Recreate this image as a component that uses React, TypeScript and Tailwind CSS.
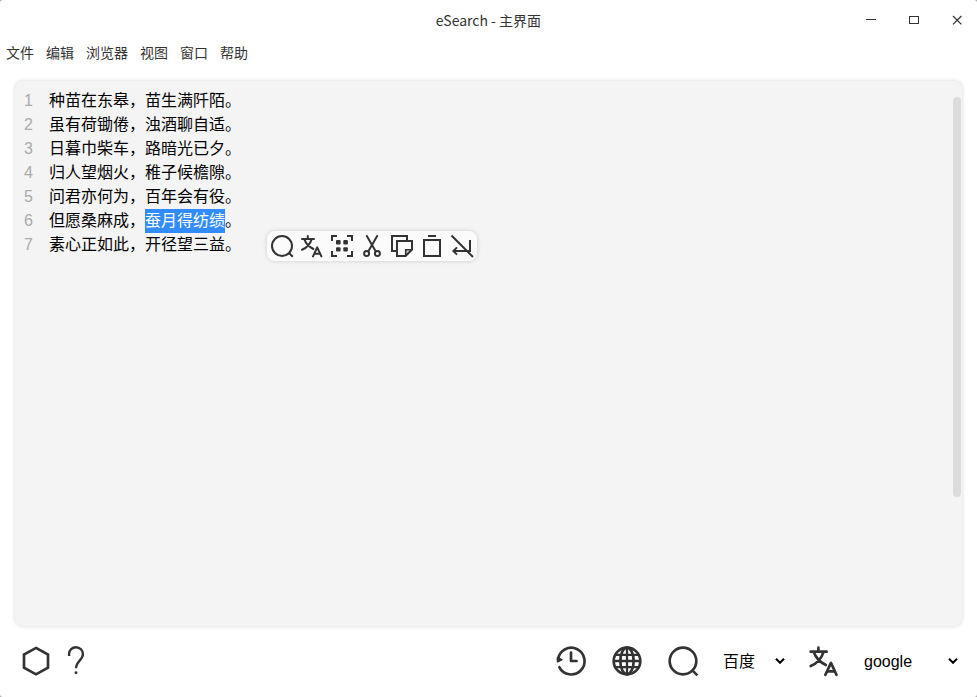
import React from "react";

type IconProps = { className?: string; children: React.ReactNode };

function Icon({ className = "size-[30px]", children }: IconProps) {
  return (
    <svg viewBox="0 0 30 30" className={`${className} block shrink-0`} fill="none" stroke="#333" strokeWidth={2}>
      {children}
    </svg>
  );
}

const searchArt = (
  <>
    <circle cx="15" cy="15" r="10" />
    <path d="M22 22l3.8 3.8" />
  </>
);
const translateArt = (
  <g strokeLinecap="round" strokeLinejoin="round">
    <path d="M10.8 5v3M5 8h12M14.6 8.4C13 13.5 9.5 17 5 18.8M7.4 8.4C9 13 12.4 16 16.4 18" />
    <path d="M16 25.4l4.2-9 4.2 9M17.5 22.8h5.4" />
  </g>
);
const scanArt = (
  <>
    <path d="M5 10V5h5M20 5h5v5M25 20v5h-5M10 25H5v-5" />
    <g fill="#333" stroke="none">
      <rect x="9" y="9" width="4.6" height="4.4" rx="1" />
      <rect x="16.3" y="9" width="4.6" height="4.4" rx="1" />
      <rect x="9" y="16.2" width="4.6" height="4.4" rx="1" />
      <rect x="16.3" y="16.2" width="4.6" height="4.4" rx="1" />
    </g>
  </>
);
const cutArt = (
  <>
    <path d="M9.4 4.2L18.8 20.4M20.6 4.2L11.2 20.4" />
    <circle cx="9.6" cy="22.5" r="2.5" />
    <circle cx="20.4" cy="22.5" r="2.5" />
  </>
);
const copyArt = (
  <>
    <path d="M9 20H5V5h15v4" />
    <path d="M18.5 25v-6.5H25z" fill="#ccc" stroke="none" />
    <path d="M10 10h15v8.6L18.6 25H10z" />
    <path d="M25 18.7h-6.3V25" strokeWidth="1.6" />
  </>
);
const pasteArt = (
  <>
    <rect x="7" y="9" width="16" height="16" />
    <path d="M11 5h8" />
  </>
);
const unwrapArt = <path d="M4.5 4.5L26 26M23 9v11H6.5M10 16.4L6.4 20l3.6 3.6" />;
const hexagonArt = <path d="M15 5.2l9 5v9.8l-9 5-9-5v-9.8z" />;
const questionArt = (
  <>
    <path d="M9.8 11.2V9.8A5.2 5.2 0 0 1 20.2 9.9C20.2 14 15 15.5 15 20.5" strokeWidth="1.8" />
    <circle cx="15" cy="23.8" r="1.1" fill="#333" stroke="none" />
  </>
);
const historyArt = (
  <g strokeLinecap="round" strokeLinejoin="round">
    <path d="M5.3 13.5A10 10 0 1 1 6.3 19.7" />
    <path d="M15 8.6V15h4.2" />
    <path d="M4.9 12.5v3l3.2-1.5z" fill="#333" strokeWidth="1.2" />
  </g>
);
const globeArt = (
  <>
    <circle cx="15" cy="15" r="10" />
    <ellipse cx="15" cy="15" rx="5" ry="10" />
    <path d="M15 5v20M5 15h20M6.6 10.4h16.8M6.6 19.6h16.8" strokeWidth="1.7" />
  </>
);

const menus = ["文件", "编辑", "浏览器", "视图", "窗口", "帮助"];
const poem = [
  ["种苗在东皋，苗生满阡陌。"],
  ["虽有荷锄倦，浊酒聊自适。"],
  ["日暮巾柴车，路暗光已夕。"],
  ["归人望烟火，稚子候檐隙。"],
  ["问君亦何为，百年会有役。"],
  ["但愿桑麻成，", "蚕月得纺绩", "。"],
  ["素心正如此，开径望三益。"],
];
const tools = [searchArt, translateArt, scanArt, cutArt, copyArt, pasteArt, unwrapArt];

function Chevron() {
  return (
    <svg viewBox="0 0 10 6" className="h-[6px] w-[10px] shrink-0" fill="none" stroke="#000" strokeWidth={2}>
      <path d="M1 .8l4 4 4-4" />
    </svg>
  );
}

export default function App() {
  return (
    <div className="h-[697px] w-[977px] bg-[#aaa]">
      <div className="flex h-full flex-col overflow-hidden rounded-[3px] bg-white font-['Liberation_Sans','Noto_Sans_CJK_SC',sans-serif] text-black">
        <header className="grid h-10 shrink-0 grid-cols-[1fr_auto_1fr] items-center font-['Noto_Sans_CJK_SC',sans-serif] text-sm text-[#333]">
          <span />
          <h1 className="pb-px">eSearch - 主界面</h1>
          <div className="flex justify-end">
            <svg viewBox="0 0 112 20" className="h-5 w-28" fill="none" stroke="#333">
              <path d="M1 9.5h10" />
              <rect x="44.5" y="6.5" width="9" height="7" />
              <path d="M88 6l8.4 8.4M96.4 6L88 14.4" strokeWidth="1.2" />
            </svg>
          </div>
        </header>
        <nav className="flex h-[27px] shrink-0 items-center gap-3 px-1.5 pb-1 font-['Noto_Sans_CJK_SC',sans-serif] text-sm text-[#333]">
          {menus.map((m) => <span key={m}>{m}</span>)}
        </nav>
        <main className="relative mx-[15px] mt-3.5 flex h-[545px] w-[947px] shrink-0 justify-between rounded-[8px] bg-[#f4f4f4] pt-2 shadow-[0_0_4px_rgba(0,0,0,0.17)]">
          <ol className="leading-6">
            {poem.map((parts, i) => (
              <li key={i} className="flex h-6">
                <span className="w-[18px] text-right text-[#aaa]">{i + 1}</span>
                <span className="flex pl-4">
                  {parts.map((p, j) => (
                    <span key={j} className={j === 1 ? "bg-[#308cff] text-white" : ""}>{p}</span>
                  ))}
                </span>
              </li>
            ))}
          </ol>
          <div className="mt-2 mr-px h-[400px] w-2 rounded-[4px] bg-[#dcdcdc]" />
          <div className="absolute top-[150px] left-[252px] flex rounded-[8px] bg-[#fbfbfb] shadow-[0_0_4px_rgba(0,0,0,0.17)]">
            {tools.map((t, i) => <Icon key={i}>{t}</Icon>)}
          </div>
        </main>
        <footer className="flex h-[70px] items-center justify-between pr-[19px] pl-4">
          <div className="flex">
            <Icon className="size-10">{hexagonArt}</Icon>
            <Icon className="size-10">{questionArt}</Icon>
          </div>
          <div className="flex items-center">
            <div className="flex gap-4">
              <Icon className="size-10">{historyArt}</Icon>
              <Icon className="size-10">{globeArt}</Icon>
              <Icon className="size-10">{searchArt}</Icon>
            </div>
            <div className="ml-5 flex w-[62px] items-center justify-between">
              <span className="pt-0.5">百度</span>
              <Chevron />
            </div>
            <Icon className="ml-[19px] size-10">{translateArt}</Icon>
            <div className="ml-5 flex w-[94px] items-center justify-between">
              <span className="pt-0.5">google</span>
              <Chevron />
            </div>
          </div>
        </footer>
      </div>
    </div>
  );
}
